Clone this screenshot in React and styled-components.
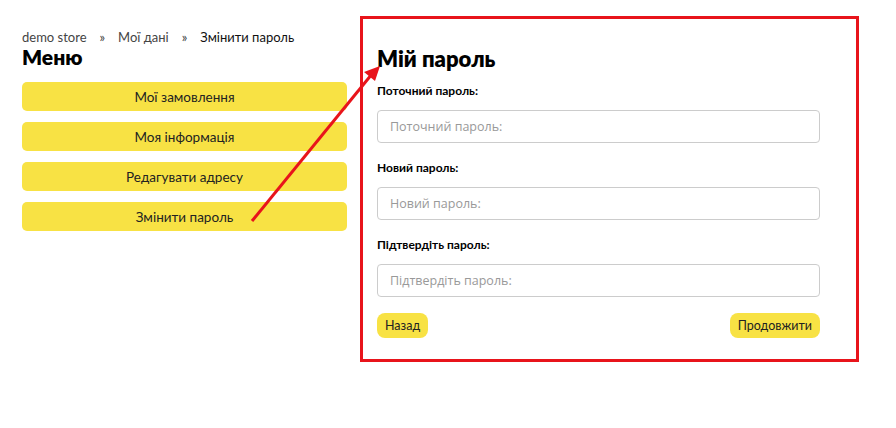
import React from 'react'
import styled, { createGlobalStyle } from 'styled-components'

const Global = createGlobalStyle`
  body {
    margin: 0;
    background: #fff;
    font-family: Lato, "Noto Sans", "DejaVu Sans", sans-serif;
    color: #111;
  }
`

const menu = ['Мої замовлення', 'Моя інформація', 'Редагувати адресу', 'Змінити пароль']
const fields = ['Поточний пароль:', 'Новий пароль:', 'Підтвердіть пароль:']

function App() {
  return (
    <>
      <Global />
      <Page>
        <Side>
          <Crumbs>
            <Crumb>demo store</Crumb>
            <Sep>»</Sep>
            <Crumb>Мої дані</Crumb>
            <Sep>»</Sep>
            <Crumb $current>Змінити пароль</Crumb>
          </Crumbs>
          <MenuTitle>Меню</MenuTitle>
          <MenuList>
            {menu.map((item) => (
              <MenuButton key={item}>{item}</MenuButton>
            ))}
          </MenuList>
        </Side>
        <Box>
          <Title>Мій пароль</Title>
          {fields.map((f, i) => (
            <Field key={f} $first={i === 0}>
              <Label>{f}</Label>
              <Input type="password" placeholder={f} />
            </Field>
          ))}
          <Actions>
            <SmallBtn>Назад</SmallBtn>
            <SmallBtn>Продовжити</SmallBtn>
          </Actions>
        </Box>
        {/* red arrow annotation drawn over the page */}
        <Arrow width="896" height="428" viewBox="0 0 896 428">
          <line x1="252" y1="221" x2="372" y2="74" stroke="#e8141b" strokeWidth="3" />
          <polygon points="380,66 364,72 375,81" fill="#e8141b" />
        </Arrow>
      </Page>
    </>
  )
}

const Page = styled.div`
  position: relative;
  display: flex;
  align-items: flex-start;
  padding: 16px 0 0 22px;
  height: 412px;
`
const Side = styled.div`
  width: 325px;
  padding-top: 13px;
`
const Crumbs = styled.div`
  display: flex;
  align-items: center;
  font-size: 13px;
  line-height: 16px;
`
const Crumb = styled.span`
  color: ${(p) => (p.$current ? '#111' : '#444')};
`
const Sep = styled.span`
  margin: 0 13px;
  color: #444;
`
const MenuTitle = styled.h2`
  margin: 0;
  font-size: 21px;
  line-height: 24px;
  font-weight: 800;
  color: #000;
`
const MenuList = styled.div`
  display: flex;
  flex-direction: column;
  gap: 11px;
  margin-top: 13px;
`
const MenuButton = styled.button`
  height: 29px;
  border: none;
  border-radius: 5px;
  background: #f8e244;
  font-family: inherit;
  font-size: 13.5px;
  color: #222;
  padding: 0;
`
const Box = styled.div`
  margin-left: 13px;
  border: 3px solid #e8141b;
  padding: 27px 36px 0 14px;
  box-sizing: border-box;
  width: 499px;
  height: 346px;
`
const Title = styled.h1`
  margin: 0;
  font-size: 22px;
  line-height: 26px;
  font-weight: 800;
  color: #000;
`
const Field = styled.div`
  display: flex;
  flex-direction: column;
  margin-top: ${(p) => (p.$first ? '11px' : '17px')};
`
const Label = styled.label`
  font-size: 12px;
  font-weight: 700;
  line-height: 16px;
  color: #000;
  margin-bottom: 11px;
`
const Input = styled.input`
  height: 33px;
  box-sizing: border-box;
  border: 1px solid #ccc;
  border-radius: 4px;
  padding: 0 12px;
  font-family: "Open Sans", "Noto Sans", sans-serif;
  font-size: 12.5px;
  &::placeholder {
    color: #999;
  }
`
const Actions = styled.div`
  display: flex;
  justify-content: space-between;
  margin-top: 16px;
`
const SmallBtn = styled.button`
  height: 25px;
  border: none;
  border-radius: 8px;
  background: #f8e244;
  padding: 0 8px;
  font-family: inherit;
  font-size: 12.5px;
  color: #222;
`
const Arrow = styled.svg`
  position: absolute;
  left: 0;
  top: 0;
  pointer-events: none;
`

export default App
